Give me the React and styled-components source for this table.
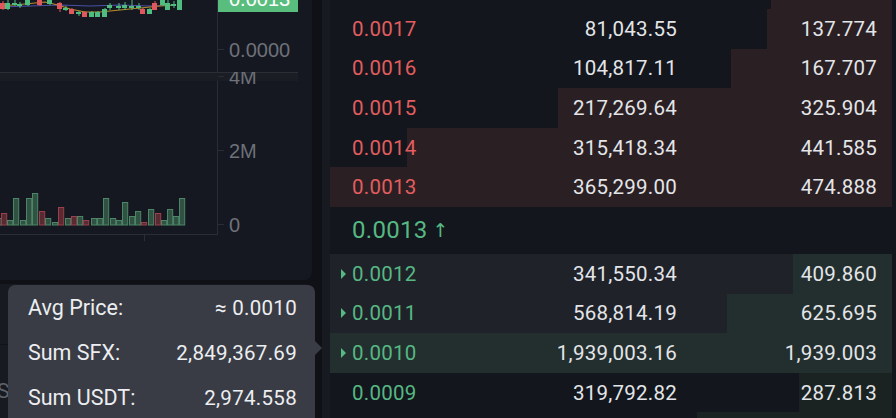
import React from 'react';
import styled, { createGlobalStyle } from 'styled-components';

const Global = createGlobalStyle`
  html, body { margin: 0; padding: 0; background: #0f1116; }
  body { font-family: Roboto, "Noto Sans", sans-serif; }
`;

const GREEN = '#56b883';
const RED = '#e35d5f';

const Page = styled.div`
  display: flex;
  gap: 10px;
  width: 896px;
  height: 418px;
  overflow: hidden;
  background: #0f1116;
`;

const LeftColumn = styled.div`
  position: relative;
  width: 312px;
  flex: none;
  display: flex;
  flex-direction: column;
  gap: 4px;
`;

const ChartCard = styled.div`
  height: 280px;
  background: #151820;
  border-radius: 0 0 8px 0;
  overflow: hidden;
  flex: none;
`;

const BottomCard = styled.div`
  flex: 1;
  background: #171a21;
  border-radius: 0 8px 0 0;
  display: flex;
  flex-direction: column;
  overflow: hidden;
`;

const BottomHeader = styled.div`
  height: 60px;
  border-bottom: 1px solid #111318;
  flex: none;
`;

const BottomRow = styled.div`
  height: 92px;
  flex: none;
  display: flex;
  align-items: center;
  font-size: 21px;
  color: #5d616a;
  margin-left: -3px;
`;

const Tooltip = styled.div`
  position: absolute;
  left: 8px;
  top: 285px;
  width: 307px;
  height: 150px;
  background: #393c44;
  border-radius: 7px;
  padding: 0 18px 0 20px;
  box-sizing: border-box;
  color: #eceef1;
  font-size: 20.5px;
  z-index: 5;
  &::after {
    content: '';
    position: absolute;
    right: -7px;
    top: 56px;
    border-left: 7px solid #393c44;
    border-top: 7px solid transparent;
    border-bottom: 7px solid transparent;
  }
`;

const TipRow = styled.div`
  height: 45px;
  display: flex;
  align-items: center;
  justify-content: space-between;
`;

const TipLabel = styled.span`
  font-size: 21.5px;
`;

const TipValue = styled.span`
  letter-spacing: 0.3px;
`;

const OrderBook = styled.div`
  flex: 1;
  background: #171a21;
  padding-left: 8px;
  overflow: hidden;
`;

const List = styled.div`
  background: #13161c;
  padding-right: 4px;
  margin-top: -30.6px;
  min-height: 460px;
`;

const Row = styled.div`
  position: relative;
  height: 39.6px;
  display: grid;
  grid-template-columns: 125px 200px 200px;
  align-items: center;
  padding: 0 15px 0 22px;
  background: ${p => (p.$hover ? '#1f2229' : 'transparent')};
  font-size: 20.5px;
  letter-spacing: 0.25px;
  color: #e3e5e8;
`;

const DepthBar = styled.div`
  position: absolute;
  right: 0;
  top: 0;
  bottom: 0;
  background: ${p =>
    p.$side === 'ask' ? '#2a1f23' : p.$hover ? '#232f2e' : '#1a2322'};
`;

const Price = styled.span`
  position: relative;
  color: ${p => (p.$side === 'ask' ? RED : GREEN)};
`;

const Num = styled.span`
  position: relative;
  text-align: right;
`;

const Marker = styled.span`
  position: absolute;
  left: 11px;
  top: 50%;
  margin-top: -5px;
  border-left: 5px solid ${GREEN};
  border-top: 5px solid transparent;
  border-bottom: 5px solid transparent;
`;

const MidRow = styled.div`
  height: 47px;
  display: flex;
  align-items: center;
  padding-left: 22px;
  color: ${GREEN};
  font-size: 24px;
  letter-spacing: 0.3px;
`;

const MidArrow = styled.span`
  font-size: 19px;
  margin-left: 5px;
  font-family: "DejaVu Sans", sans-serif;
`;

const asks = [
  { p: '', a: '', t: '', w: 121 },
  { p: '0.0017', a: '81,043.55', t: '137.774', w: 125 },
  { p: '0.0016', a: '104,817.11', t: '167.707', w: 161 },
  { p: '0.0015', a: '217,269.64', t: '325.904', w: 334 },
  { p: '0.0014', a: '315,418.34', t: '441.585', w: 485 },
  { p: '0.0013', a: '365,299.00', t: '474.888', w: 562 },
];

const bids = [
  { p: '0.0012', a: '341,550.34', t: '409.860', w: 99, hover: true },
  { p: '0.0011', a: '568,814.19', t: '625.695', w: 165, hover: true },
  { p: '0.0010', a: '1,939,003.16', t: '1,939.003', w: 562, hover: true },
  { p: '0.0009', a: '319,792.82', t: '287.813', w: 93 },
  { p: '0.0008', a: '243,870.10', t: '195.096', w: 195 },
];

const volume = [
  [-4, 'g', 218], [1, 'r', 213], [7, 'g', 220], [13, 'g', 198], [20, 'g', 220],
  [26, 'g', 198], [32, 'g', 193], [39, 'r', 211], [45, 'g', 218], [52, 'g', 222],
  [58, 'r', 207], [65, 'g', 218], [71, 'r', 216], [77, 'g', 216], [83, 'r', 220],
  [91, 'g', 218], [97, 'g', 218], [103, 'g', 198], [110, 'g', 218], [116, 'g', 220],
  [122, 'g', 202], [129, 'g', 216], [135, 'g', 211], [141, 'r', 222], [148, 'g', 209],
  [155, 'r', 213], [161, 'g', 220], [167, 'g', 209], [173, 'g', 216], [179, 'g', 198],
];

// [x, color, bodyTop, bodyBottom, wickTop, wickBottom]
const candles = [
  [0, 'r', 3, 9, 1, 10], [5, 'g', 3, 9, 0, 10], [12, 'g', 3, 5, 0, 6], [17, 'g', 4, 6, 2, 8],
  [25, 'g', 0, 5, 0, 6], [37, 'r', 0, 5, 0, 6], [47, 'g', 0, 4, 0, 5], [57, 'r', 3, 9, 2, 12],
  [63, 'g', 8, 10, 6, 11], [69, 'r', 9, 14, 8, 14], [76, 'g', 12, 14, 11, 16], [82, 'r', 12, 17, 11, 17],
  [89, 'g', 12, 17, 11, 17], [95, 'g', 12, 17, 11, 17], [102, 'g', 9, 17, 8, 17], [107, 'g', 5, 8, 3, 10],
  [116, 'g', 6, 8, 3, 10], [122, 'g', 5, 8, 2, 10], [129, 'g', 6, 8, 0, 10], [136, 'g', 6, 8, 3, 10],
  [140, 'r', 9, 14, 8, 14], [147, 'g', 9, 14, 8, 14], [152, 'r', 3, 10, 1, 10], [160, 'g', 0, 5, 0, 6],
  [165, 'g', 3, 10, 0, 10], [171, 'g', 4, 6, 1, 8], [177, 'g', 0, 10, 0, 10],
];

function Chart() {
  const lbl = { fontFamily: '"Liberation Sans", Arial, sans-serif', fontSize: 20, fill: '#6d7179' };
  return (
    <svg width="312" height="280" viewBox="0 0 312 280" style={{ display: 'block' }}>
      <defs>
        <clipPath id="volPane">
          <rect x="0" y="72" width="312" height="208" />
        </clipPath>
      </defs>
      {/* MA lines */}
      <path d="M0 7 L30 6 L60 5 L90 6 L120 5 L150 6 L176 5" stroke="#4b4fa8" strokeWidth="1.2" fill="none" />
      <path d="M0 6 L25 4 L45 2 L58 5 L70 9 L85 12 L100 12 L120 10 L140 8 L160 6 L176 5" stroke="#b88b2a" strokeWidth="1.2" fill="none" />
      {candles.map(([x, c, bt, bb, wt, wb], i) => {
        const col = c === 'g' ? '#4fbd7f' : '#e0575d';
        return (
          <g key={i}>
            <rect x={x + 2.5} y={wt} width="1" height={wb - wt} fill={col} />
            <rect x={x} y={bt} width="5" height={Math.max(bb - bt, 1.5)} fill={col} />
          </g>
        );
      })}
      {/* price tag */}
      <rect x="217" y="0" width="81" height="12" fill="#58bd7d" />
      <text x="229" y="6" fontFamily='"Liberation Sans", Arial, sans-serif' fontSize="20" fill="#ffffff">0.0013</text>
      {/* axis */}
      <line x1="217.5" y1="0" x2="217.5" y2="234" stroke="#2a2d35" strokeWidth="1" />
      <line x1="218" y1="49.5" x2="224" y2="49.5" stroke="#2a2d35" strokeWidth="1" />
      <text x="229" y="57" style={lbl}>0.0000</text>
      {/* pane separator */}
      <rect x="0" y="73" width="298" height="8" fill="#1a1d24" />
      <line x1="0" y1="72.5" x2="298" y2="72.5" stroke="#2b2e36" strokeWidth="1" />
      <g clipPath="url(#volPane)">
        <text x="229" y="83.5" style={lbl}>4M</text>
      </g>
      <line x1="218" y1="76.5" x2="224" y2="76.5" stroke="#2a2d35" strokeWidth="1" />
      <line x1="218" y1="150.5" x2="224" y2="150.5" stroke="#2a2d35" strokeWidth="1" />
      <text x="229" y="158" style={lbl}>2M</text>
      <line x1="218" y1="224.5" x2="224" y2="224.5" stroke="#2a2d35" strokeWidth="1" />
      <text x="229" y="232" style={lbl}>0</text>
      {/* volume bars */}
      {volume.map(([x, c, top], i) => (
        <rect
          key={i}
          x={x + 0.5}
          y={top + 0.5}
          width="5.2"
          height={225 - top - 0.5}
          fill={c === 'g' ? '#2f5243' : '#5a2a33'}
          stroke={c === 'g' ? '#4d8567' : '#9a3f4b'}
          strokeWidth="1"
        />
      ))}
      {/* bottom axis */}
      <line x1="0" y1="234.5" x2="218" y2="234.5" stroke="#2a2d35" strokeWidth="1" />
      <line x1="144.5" y1="235" x2="144.5" y2="241" stroke="#2a2d35" strokeWidth="1" />
    </svg>
  );
}

function BookRow({ side, row }) {
  return (
    <Row $hover={row.hover}>
      <DepthBar $side={side} $hover={row.hover} style={{ width: row.w + 'px' }} />
      {row.hover && <Marker />}
      <Price $side={side}>{row.p}</Price>
      <Num>{row.a}</Num>
      <Num>{row.t}</Num>
    </Row>
  );
}

export default function App() {
  return (
    <>
      <Global />
      <Page>
        <LeftColumn>
          <ChartCard>
            <Chart />
          </ChartCard>
          <BottomCard>
            <BottomHeader />
            <BottomRow>S</BottomRow>
          </BottomCard>
          <Tooltip>
            <TipRow>
              <TipLabel>Avg Price:</TipLabel>
              <TipValue>≈ 0.0010</TipValue>
            </TipRow>
            <TipRow>
              <TipLabel>Sum SFX:</TipLabel>
              <TipValue>2,849,367.69</TipValue>
            </TipRow>
            <TipRow>
              <TipLabel>Sum USDT:</TipLabel>
              <TipValue>2,974.558</TipValue>
            </TipRow>
          </Tooltip>
        </LeftColumn>
        <OrderBook>
          <List>
            {asks.map((r, i) => (
              <BookRow key={'a' + i} side="ask" row={r} />
            ))}
            <MidRow>
              0.0013<MidArrow>↑</MidArrow>
            </MidRow>
            {bids.map((r, i) => (
              <BookRow key={'b' + i} side="bid" row={r} />
            ))}
          </List>
        </OrderBook>
      </Page>
    </>
  );
}
